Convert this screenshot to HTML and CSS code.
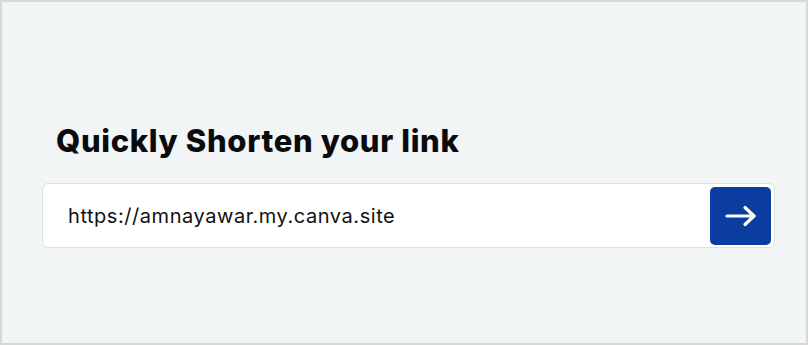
FILE: index.html
```html
<!DOCTYPE html>
<html>
<head>
<meta charset="utf-8">
<link rel="stylesheet" href="styles.css">
</head>
<body>
<div class="frame">
  <div class="shortener">
    <h1 class="title">Quickly Shorten your link</h1>
    <div class="field">
      <span class="url">https://amnayawar.my.canva.site</span>
      <button class="go" aria-label="Shorten">
        <svg width="32" height="22" viewBox="0 0 32 22" fill="none" stroke="#fff" stroke-width="3.2" stroke-linecap="round" stroke-linejoin="round">
          <path d="M2 11H29"/>
          <path d="M20 2.5L29 11L20 19.5"/>
        </svg>
      </button>
    </div>
  </div>
</div>
</body>
</html>
```

FILE: styles.css
```css
html, body {
  margin: 0;
  padding: 0;
}
body {
  width: 808px;
  height: 345px;
  font-family: Inter, "Noto Sans", sans-serif;
  background: #f1f5f6;
}
.frame {
  box-sizing: border-box;
  width: 808px;
  height: 345px;
  border: 2px solid #d6d8d9;
  background: #f1f5f6;
  padding: 120px 31px 0 40px;
}
.title {
  margin: 0 0 24px 14px;
  font-size: 31px;
  line-height: 37px;
  font-weight: 800;
  color: #0b0b0d;
  letter-spacing: 0.65px;
}
.field {
  box-sizing: border-box;
  height: 65px;
  display: flex;
  align-items: center;
  justify-content: space-between;
  background: #fff;
  border: 1px solid #dde1e4;
  border-radius: 6px;
  padding: 0 3px 0 25px;
}
.url {
  font-size: 20px;
  letter-spacing: 0.55px;
  color: #111;
  padding-top: 1px;
}
.go {
  width: 61px;
  height: 58px;
  border: none;
  border-radius: 5px;
  background: #0a3d9f;
  display: flex;
  align-items: center;
  justify-content: center;
  padding: 0;
}
```
